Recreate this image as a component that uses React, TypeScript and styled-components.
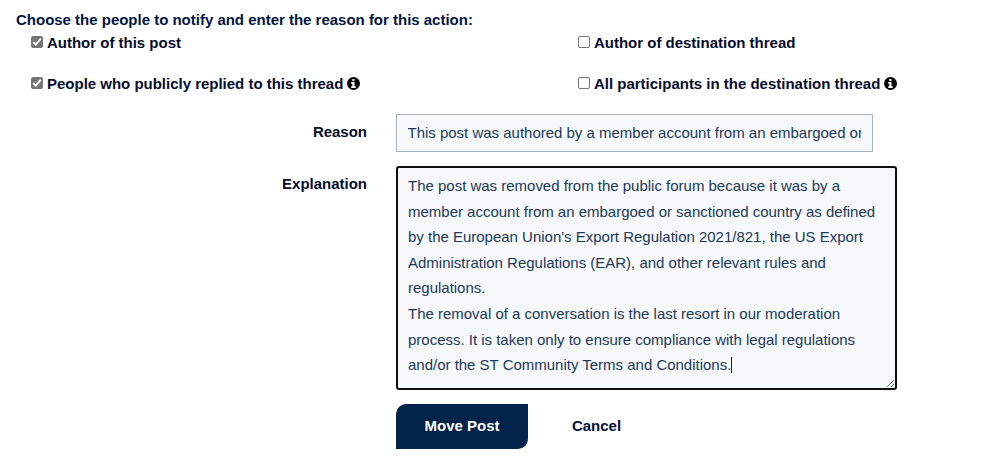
import React from "react";
import styled, { createGlobalStyle } from "styled-components";

const GlobalStyle = createGlobalStyle`
  * { box-sizing: border-box; }
  body {
    margin: 0;
    background: #fff;
    color: #03103a;
    font: 700 15px/20px "Liberation Sans", Arial, sans-serif;
    letter-spacing: -0.01px;
  }
`;

const Form = styled.form`
  width: 999px;
  height: 463px;
  padding: 10px 0 0 16px;
  overflow: hidden;
`;

const Title = styled.h2`
  margin: 0;
  font: inherit;
  color: #03143f;
  white-space: nowrap;
`;

const Options = styled.div`
  display: grid;
  grid-template-columns: 547px 1fr;
  grid-template-rows: 20px 20px;
  row-gap: 21px;
  padding: 3px 0 0 15px;
`;

const Option = styled.label`
  display: flex;
  align-items: center;
  color: #060d2c;
  white-space: nowrap;
`;

const Box = styled.span<{ $checked?: boolean }>`
  display: flex;
  width: 12px;
  height: 12px;
  margin: 0 4px 2px 0;
  border: 1px solid #767676;
  border-radius: 2px;
  background: ${(p) => (p.$checked ? "#767676" : "#fff")};
`;

const InfoSvg = styled.svg`
  width: 13px;
  height: 13px;
  margin: 0 0 1px 4px;
`;

const Row = styled.div<{ $top: number }>`
  display: grid;
  grid-template-columns: 351px auto;
  column-gap: 29px;
  justify-content: start;
  margin-top: ${(p) => p.$top}px;
`;

const FieldLabel = styled.span`
  padding-top: 8px;
  text-align: right;
  color: #060d2c;
`;

const ReasonInput = styled.input`
  width: 477px;
  height: 38px;
  padding: 0 11px 2px 10.5px;
  border: 1px solid #a9b0bd;
  border-radius: 0;
  outline: none;
  background: #f6f8fa;
  color: #1c3959;
  font: 400 15px "Liberation Sans", Arial, sans-serif;
  letter-spacing: -0.01px;
`;

const Editor = styled.div`
  position: relative;
  width: 501px;
  height: 224px;
  padding: 5px 10px;
  border: 2px solid #101010;
  border-radius: 3px;
  background: #f6f8fa;
  color: #1c3959;
  font-weight: 400;
  line-height: 25.6px;
`;

const Line = styled.div`
  white-space: nowrap;
`;

const Caret = styled.span`
  display: inline-block;
  width: 1px;
  height: 16px;
  background: #03234b;
  vertical-align: -3px;
`;

const Grip = styled.svg`
  position: absolute;
  right: 0;
  bottom: 0;
  width: 9px;
  height: 9px;
`;

const Actions = styled.div`
  display: flex;
  margin: 14px 0 0 380px;
`;

const Button = styled.button<{ $primary?: boolean }>`
  width: ${(p) => (p.$primary ? 132 : 137)}px;
  height: 45px;
  padding: 0 0 2px;
  border: 0;
  border-radius: ${(p) => (p.$primary ? "10px 0 10px 0" : "0")};
  background: ${(p) => (p.$primary ? "#03234b" : "transparent")};
  color: ${(p) => (p.$primary ? "#fff" : "#03103a")};
  font: inherit;
  letter-spacing: inherit;
`;

const CheckBox = ({ checked }: { checked?: boolean }) => (
  <Box $checked={checked}>
    {checked && (
      <svg width="10" height="10" viewBox="0 0 10 10">
        <path d="M1.3 5.1 3.8 7.6 8.8 1.7" fill="none" stroke="#fff" strokeWidth="1.9" />
      </svg>
    )}
  </Box>
);

const Info = () => (
  <InfoSvg viewBox="0 0 13 13">
    <circle cx="6.5" cy="6.5" r="6.5" fill="#000" />
    <path d="M5.300 1.900h2.200v2H5.300zM4.200 5h3.300v4.200h1.200V11H4.200V9.200h1.100V6.700H4.200z" fill="#fff" />
  </InfoSvg>
);

const explanation = [
  "The post was removed from the public forum because it was by a",
  "member account from an embargoed or sanctioned country as defined",
  "by the European Union's Export Regulation 2021/821, the US Export",
  "Administration Regulations (EAR), and other relevant rules and",
  "regulations.",
  "The removal of a conversation is the last resort in our moderation",
  "process. It is taken only to ensure compliance with legal regulations",
  "and/or the ST Community Terms and Conditions.",
];

export default function App() {
  return (
    <>
      <GlobalStyle />
      <Form>
        <Title>Choose the people to notify and enter the reason for this action:</Title>
        <Options>
          <Option><CheckBox checked />Author of this post</Option>
          <Option><CheckBox />Author of destination thread</Option>
          <Option><CheckBox checked />People who publicly replied to this thread<Info /></Option>
          <Option><CheckBox />All participants in the destination thread<Info /></Option>
        </Options>
        <Row $top={20}>
          <FieldLabel>Reason</FieldLabel>
          <ReasonInput readOnly value="This post was authored by a member account from an embargoed or sanctioned country" />
        </Row>
        <Row $top={14}>
          <FieldLabel>Explanation</FieldLabel>
          <Editor>
            {explanation.map((line, i) => (
              <Line key={line}>
                {line}
                {i === explanation.length - 1 && <Caret />}
              </Line>
            ))}
            <Grip viewBox="0 0 9 9">
              <path d="M1 8 8 1M5 8 8 5" stroke="#6c7178" strokeWidth="1" />
            </Grip>
          </Editor>
        </Row>
        <Actions>
          <Button type="button" $primary>Move Post</Button>
          <Button type="button">Cancel</Button>
        </Actions>
      </Form>
    </>
  );
}
